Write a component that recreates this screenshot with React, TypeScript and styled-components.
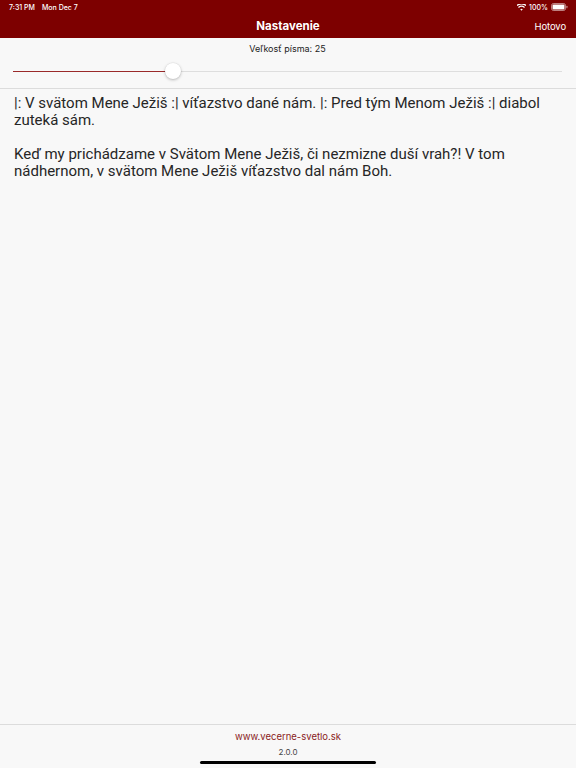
import React from 'react'
import styled, { createGlobalStyle } from 'styled-components'

const GlobalStyle = createGlobalStyle`
  html, body {
    margin: 0;
    padding: 0;
    background: #f8f8f8;
    font-family: Inter, "Noto Sans", sans-serif;
  }
`

const Screen = styled.div`
  width: 576px;
  height: 768px;
  display: flex;
  flex-direction: column;
  background: #f8f8f8;
  overflow: hidden;
  position: relative;
`

const Header = styled.div`
  background: #7d0000;
  color: #fff;
  height: 38px;
  display: flex;
  flex-direction: column;
`

const StatusBar = styled.div`
  height: 14px;
  display: flex;
  align-items: center;
  justify-content: space-between;
  padding: 0 8px 0 9px;
  font-size: 7px;
  font-weight: 500;
`

const StatusGroup = styled.div<{ $gap: number }>`
  display: flex;
  align-items: center;
  gap: ${p => p.$gap}px;
`

const NavBar = styled.div`
  flex: 1;
  display: grid;
  grid-template-columns: 1fr auto 1fr;
  align-items: center;
  padding: 0 10px;
`

const NavTitle = styled.div`
  font-size: 11.5px;
  font-weight: 700;
`

const NavButton = styled.div`
  justify-self: end;
  font-size: 9.5px;
  letter-spacing: -0.1px;
`

const Settings = styled.div`
  border-bottom: 1px solid #dcdcdc;
  padding: 5px 14px 0 13px;
  height: 45px;
  display: flex;
  flex-direction: column;
  align-items: center;
`

const SizeLabel = styled.div`
  font-size: 9px;
  color: #222;
`

const SliderTrack = styled.div`
  position: relative;
  width: 100%;
  height: 1px;
  background: #dedede;
  margin-top: 17px;
`

const SliderFill = styled.div`
  height: 100%;
  background: #9a2a2a;
`

const Thumb = styled.div`
  position: absolute;
  top: -8px;
  width: 16px;
  height: 16px;
  margin-left: -8px;
  border-radius: 50%;
  background: #fff;
  box-shadow: 0 1px 3px rgba(0, 0, 0, 0.25), 0 0 0 0.5px rgba(0, 0, 0, 0.06);
`

const Content = styled.div`
  flex: 1;
  padding: 6px 14px 0 14px;
  font-family: Roboto, "Noto Sans", sans-serif;
  font-size: 15px;
  line-height: 17px;
  color: #262626;
`

const Paragraph = styled.p`
  margin: 0 0 17px;
`

const Footer = styled.div`
  border-top: 1px solid #dcdcdc;
  height: 37px;
  display: flex;
  flex-direction: column;
  align-items: center;
  padding-top: 6px;
`

const Link = styled.div`
  color: #8a1c1c;
  font-size: 9.5px;
`

const Version = styled.div`
  color: #444;
  font-size: 8px;
  margin-top: 5px;
`

const HomeIndicator = styled.div`
  position: absolute;
  bottom: 4px;
  left: 200px;
  width: 176px;
  height: 3px;
  border-radius: 2px;
  background: #000;
`

const value = 25
const min = 10
const max = 60

const App = () => {
  const pct = ((value - min) / (max - min)) * 100 - 0.9
  return (
    <>
      <GlobalStyle />
      <Screen>
        <Header>
          <StatusBar>
            <StatusGroup $gap={7}>
              <span>7:31 PM</span>
              <span>Mon Dec 7</span>
            </StatusGroup>
            <StatusGroup $gap={3}>
              <svg width="9" height="7" viewBox="0 0 18 13">
                <path d="M9 13l2.6-3.2a4.2 4.2 0 0 0-5.2 0z" fill="#fff" />
                <path d="M3.7 7.4a8 8 0 0 1 10.6 0l1.6-2a10.8 10.8 0 0 0-13.8 0z" fill="#fff" />
                <path d="M0.5 3.6a13 13 0 0 1 17 0L19 1.6a16 16 0 0 0-20 0z" fill="#fff" />
              </svg>
              <span>100%</span>
              <svg width="17" height="8" viewBox="0 0 17 8">
                <rect x="0.5" y="0.5" width="14" height="7" rx="2" fill="none" stroke="rgba(255,255,255,0.5)" />
                <rect x="1.5" y="1.5" width="12" height="5" rx="1" fill="#fff" />
                <rect x="15.3" y="2.7" width="1.2" height="2.6" rx="0.6" fill="rgba(255,255,255,0.5)" />
              </svg>
            </StatusGroup>
          </StatusBar>
          <NavBar>
            <span />
            <NavTitle>Nastavenie</NavTitle>
            <NavButton>Hotovo</NavButton>
          </NavBar>
        </Header>
        <Settings>
          <SizeLabel>Veľkosť písma: {value}</SizeLabel>
          <SliderTrack>
            <SliderFill style={{ width: `${pct}%` }} />
            <Thumb style={{ left: `${pct}%` }} />
          </SliderTrack>
        </Settings>
        <Content>
          <Paragraph>
            |: V svätom Mene Ježiš :| víťazstvo dané nám. |: Pred tým Menom Ježiš :| diabol zuteká sám.
          </Paragraph>
          <Paragraph>
            Keď my prichádzame v Svätom Mene Ježiš, či nezmizne duší vrah?! V tom nádhernom, v svätom Mene
            Ježiš víťazstvo dal nám Boh.
          </Paragraph>
        </Content>
        <Footer>
          <Link>www.vecerne-svetlo.sk</Link>
          <Version>2.0.0</Version>
        </Footer>
        <HomeIndicator />
      </Screen>
    </>
  )
}

export default App
